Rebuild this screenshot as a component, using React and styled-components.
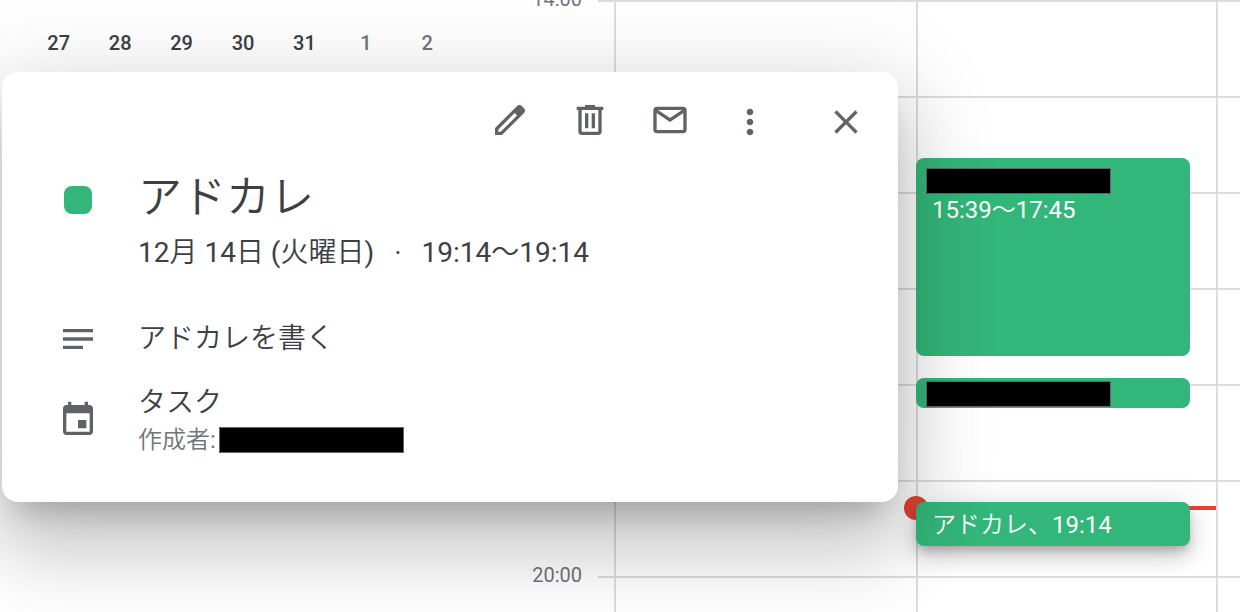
import React from "react";
import styled, { createGlobalStyle } from "styled-components";

const HOUR_HEIGHT = 96;
const FIRST_HOUR = 14;

const hours = [14, 15, 16, 17, 18, 19, 20];

const miniDays = [
  { day: 27 },
  { day: 28 },
  { day: 29 },
  { day: 30 },
  { day: 31 },
  { day: 1, muted: true },
  { day: 2, muted: true },
];

// "15:39" -> distance from the first visible hour
const timeToTop = (time) => {
  const [h, m] = time.split(":").map(Number);
  return Math.round((h - FIRST_HOUR + m / 60) * HOUR_HEIGHT);
};

const icons = {
  edit: "M20.41 4.94l-1.35-1.35c-.78-.78-2.05-.78-2.83 0L3 16.82V21h4.18L20.41 7.77c.79-.78.79-2.05 0-2.83zm-14 14.12L5 19v-1.36l9.82-9.82 1.41 1.41-9.82 9.83z",
  trash:
    "M15 4V3H9v1H4v2h1v13c0 1.1.9 2 2 2h10c1.1 0 2-.9 2-2V6h1V4h-5zm2 15H7V6h10v13zM9 8h2v9H9zm4 0h2v9h-2z",
  mail: "M20 4H4c-1.1 0-2 .9-2 2v12c0 1.1.9 2 2 2h16c1.1 0 2-.9 2-2V6c0-1.1-.9-2-2-2zm-.8 2L12 10.8 4.8 6h14.4zM4 18V7.87l8 5.33 8-5.33V18H4z",
  more: "M12 8c1.1 0 2-.9 2-2s-.9-2-2-2-2 .9-2 2 .9 2 2 2zm0 2c-1.1 0-2 .9-2 2s.9 2 2 2 2-.9 2-2-.9-2-2-2zm0 6c-1.1 0-2 .9-2 2s.9 2 2 2 2-.9 2-2-.9-2-2-2z",
  close:
    "M19 6.41L17.59 5 12 10.59 6.41 5 5 6.41 10.59 12 5 17.59 6.41 19 12 13.41 17.59 19 19 17.59 13.41 12z",
  notes: "M3 18h12v-2H3v2zM3 6v2h18V6H3zm0 7h18v-2H3v2z",
  calendar:
    "M17 12h-5v5h5v-5zM16 1v2H8V1H6v2H5c-1.11 0-1.99.9-1.99 2L3 19c0 1.1.89 2 2 2h14c1.1 0 2-.9 2-2V5c0-1.1-.9-2-2-2h-1V1h-2zm3 18H5V8h14v11z",
};

const Icon = ({ name }) => (
  <IconSvg viewBox="0 0 24 24" aria-hidden="true">
    <path d={icons[name]} />
  </IconSvg>
);

const EventDialog = () => {
  return (
    <Dialog role="dialog" aria-labelledby="event-title">
      <Toolbar>
        <ToolButton aria-label="編集">
          <Icon name="edit" />
        </ToolButton>
        <ToolButton aria-label="削除">
          <Icon name="trash" />
        </ToolButton>
        <ToolButton aria-label="メール">
          <Icon name="mail" />
        </ToolButton>
        <ToolButton aria-label="オプション" $low>
          <Icon name="more" />
        </ToolButton>
        <CloseButton aria-label="閉じる" $low>
          <Icon name="close" />
        </CloseButton>
      </Toolbar>
      <Details>
        <HeadRow>
          <ColorBox>
            <ColorSwatch />
          </ColorBox>
          <div>
            <Title id="event-title">アドカレ</Title>
            <Text>
              12月 14日 (火曜日)<Separator>·</Separator>19:14～19:14
            </Text>
          </div>
        </HeadRow>
        <Row>
          <Icon name="notes" />
          <Text>アドカレを書く</Text>
        </Row>
        <Row>
          <Icon name="calendar" />
          <div>
            <Text>タスク</Text>
            <Creator>
              作成者:
              <Redacted />
            </Creator>
          </div>
        </Row>
      </Details>
    </Dialog>
  );
};

const App = () => {
  return (
    <>
      <GlobalStyle />
      <Page>
        <Sidebar>
          <MiniMonth>
            {miniDays.map(({ day, muted }) => (
              <MiniDay key={day} $muted={muted}>
                {day}
              </MiniDay>
            ))}
          </MiniMonth>
        </Sidebar>
        <Calendar>
          <Hours>
            {hours.map((hour) => (
              <HourRow key={hour}>
                <HourLabel>{hour}:00</HourLabel>
                <HourLine />
              </HourRow>
            ))}
          </Hours>
          <Days>
            <Day />
            <Day>
              <NowLine style={{ top: timeToTop("19:16") }} />
              <Event style={{ top: timeToTop("15:39"), height: 198 }}>
                <Redacted />
                <EventText>15:39～17:45</EventText>
              </Event>
              <Event $short style={{ top: timeToTop("17:56"), height: 30 }}>
                <Redacted />
              </Event>
              <Event
                $short
                $raised
                style={{ top: timeToTop("19:14"), height: 44 }}
              >
                <EventText>アドカレ、19:14</EventText>
              </Event>
            </Day>
            <Day />
          </Days>
        </Calendar>
        <EventDialog />
      </Page>
    </>
  );
};

const GlobalStyle = createGlobalStyle`
  * {
    box-sizing: border-box;
  }
  body {
    margin: 0;
    background: #ffffff;
    color: #3c4043;
    font-family: Roboto, "Noto Sans CJK JP DemiLight", "Noto Sans CJK JP", sans-serif;
  }
  button {
    border: none;
    padding: 0;
    background: none;
    color: inherit;
    font: inherit;
    cursor: pointer;
  }
`;

const Page = styled.main`
  position: relative;
  display: flex;
  height: 100vh;
  overflow: hidden;
`;

const Sidebar = styled.aside`
  flex: none;
  width: 458px;
  padding: 27px 0 0 28px;
`;

const MiniMonth = styled.div`
  display: grid;
  grid-template-columns: repeat(7, 1fr);
`;

const MiniDay = styled.button`
  font-size: 20px;
  line-height: 32px;
  font-weight: 500;
  color: ${({ $muted }) => ($muted ? "#70757a" : "#3c4043")};
`;

/* hour lines and day columns share one cell */
const Calendar = styled.section`
  flex: 1;
  min-width: 0;
  display: grid;
  grid-template-columns: 1fr;
`;

const Hours = styled.div`
  grid-area: 1 / 1;
`;

const HourRow = styled.div`
  display: flex;
  height: ${HOUR_HEIGHT}px;
`;

const HourLabel = styled.span`
  width: 140px;
  margin-top: -13px;
  padding-right: 16px;
  font-size: 20px;
  line-height: 24px;
  text-align: right;
  color: #70757a;
`;

const HourLine = styled.div`
  flex: 1;
  border-top: 2px solid #dadce0;
`;

const Days = styled.div`
  grid-area: 1 / 1;
  display: grid;
  grid-template-columns: 151fr 150fr 24px;
  margin-left: 156px;
`;

const Day = styled.div`
  position: relative;
  border-left: 2px solid #dadce0;
`;

const Event = styled.button`
  position: absolute;
  left: -2px;
  right: 26px;
  display: flex;
  flex-direction: column;
  align-items: flex-start;
  justify-content: ${({ $short }) => ($short ? "center" : "flex-start")};
  padding: ${({ $short }) => ($short ? "2px 10px 0" : "10px")};
  border-radius: 8px;
  background: #33b679;
  color: #ffffff;
  box-shadow: ${({ $raised }) =>
    $raised
      ? "0 12px 20px rgba(0, 0, 0, 0.14), 0 2px 36px rgba(0, 0, 0, 0.12), 0 6px 10px -2px rgba(0, 0, 0, 0.2)"
      : "none"};
`;

const EventText = styled.span`
  padding-left: 6px;
  font-size: 24px;
  line-height: 32px;
  white-space: nowrap;
`;

const NowLine = styled.div`
  position: absolute;
  left: -2px;
  right: 0;
  height: 4px;
  background: #ea4335;

  &::before {
    content: "";
    position: absolute;
    top: -10px;
    left: -12px;
    width: 24px;
    height: 24px;
    border-radius: 50%;
    background: #ea4335;
  }
`;

const Redacted = styled.span`
  display: block;
  flex: none;
  width: 185px;
  height: 26px;
  border: 1px solid #666666;
  background: #000000;
`;

const Dialog = styled.div`
  position: absolute;
  top: 72px;
  left: 2px;
  width: 896px;
  padding: 8px 12px 45px 56px;
  border-radius: 16px;
  background: #ffffff;
  box-shadow:
    0 48px 76px 6px rgba(0, 0, 0, 0.14),
    0 18px 92px 16px rgba(0, 0, 0, 0.12),
    0 22px 30px -14px rgba(0, 0, 0, 0.2);
`;

const Toolbar = styled.div`
  display: flex;
  justify-content: flex-end;
`;

const ToolButton = styled.button`
  display: flex;
  align-items: center;
  justify-content: center;
  width: 80px;
  height: 80px;
  padding-top: ${({ $low }) => ($low ? "4px" : "0")};
`;

const CloseButton = styled(ToolButton)`
  margin-left: 16px;
`;

const IconSvg = styled.svg`
  display: block;
  width: 40px;
  height: 40px;
  fill: #5f6368;
`;

const Details = styled.div`
  display: grid;
  gap: 24px;
  padding-top: 8px;
`;

const Row = styled.div`
  display: grid;
  grid-template-columns: 40px 1fr;
  gap: 40px;
  align-items: center;
`;

const HeadRow = styled(Row)`
  align-items: start;
  padding-bottom: 22px;
`;

const ColorBox = styled.div`
  display: flex;
  justify-content: center;
  padding-top: 18px;
`;

const ColorSwatch = styled.span`
  width: 28px;
  height: 28px;
  border-radius: 8px;
  background: #33b679;
`;

const Title = styled.h1`
  margin: 0 0 5px;
  font-size: 44px;
  line-height: 60px;
  font-weight: 400;
`;

const Text = styled.p`
  margin: 0;
  font-size: 28px;
  line-height: 40px;
`;

const Separator = styled.span`
  margin: 0 20px;
`;

const Creator = styled.p`
  display: flex;
  align-items: center;
  gap: 3px;
  margin: 0;
  font-size: 24px;
  line-height: 34px;
  color: #70757a;
`;

export default App;
